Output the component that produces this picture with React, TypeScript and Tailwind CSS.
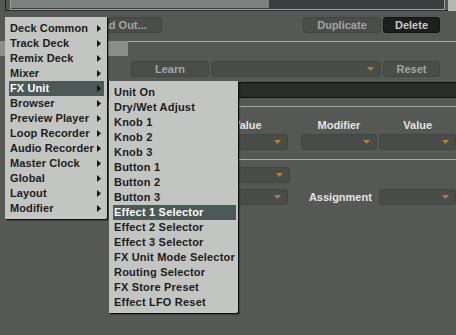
import React from 'react';

const mainItems = [
  'Deck Common',
  'Track Deck',
  'Remix Deck',
  'Mixer',
  'FX Unit',
  'Browser',
  'Preview Player',
  'Loop Recorder',
  'Audio Recorder',
  'Master Clock',
  'Global',
  'Layout',
  'Modifier',
];

const fxItems = [
  'Unit On',
  'Dry/Wet Adjust',
  'Knob 1',
  'Knob 2',
  'Knob 3',
  'Button 1',
  'Button 2',
  'Button 3',
  'Effect 1 Selector',
  'Effect 2 Selector',
  'Effect 3 Selector',
  'FX Unit Mode Selector',
  'Routing Selector',
  'FX Store Preset',
  'Effect LFO Reset',
];

const Arrow = () => (
  <svg width="4" height="7" viewBox="0 0 4 7" className="shrink-0">
    <polygon points="0,0 4,3.5 0,7" fill="#111" />
  </svg>
);

const Button = ({ label, w, dark }: { label: string; w: string; dark?: boolean }) => (
  <div
    className={`${w} h-[16px] rounded-[3px] border flex items-center justify-center text-[11px] font-bold ${
      dark ? 'bg-[#1d1e1d] border-[#121312] text-[#c9cbc9]' : 'bg-[#4b4d4b] border-[#434543] text-[#a3a5a3]'
    }`}
  >
    {label}
  </div>
);

const Dropdown = ({ w, className = '' }: { w: string; className?: string }) => (
  <div className={`${w} h-[16px] rounded-[3px] border border-[#434543] bg-[#4a4c4a] flex items-center justify-end pr-[6px] ${className}`}>
    <svg width="7" height="4" viewBox="0 0 7 4">
      <polygon points="0,0 7,0 3.5,4" fill="#b8812e" />
    </svg>
  </div>
);

export default function App() {
  return (
    <div className="relative w-[456px] h-[335px] overflow-hidden bg-[#565856] [font-family:'Liberation_Sans',Arial,sans-serif] text-[11px] leading-[15px]">
      {/* top scroll bar */}
      <div className="flex h-[11px] border-b border-[#2e302e] ml-[5px] mr-[8px]">
        <div className="w-px bg-[#1e201e]" />
        <div className="w-[4px]" />
        <div className="w-[435px] h-[10px] border-x border-b border-[#9c9e9c] bg-[#3a3e40]">
          <div className="w-[258px] h-[8px] bg-[#7c827f]" />
        </div>
      </div>
      <div className="absolute right-0 top-0 w-[8px] h-[11px] bg-[#b5b7b5]" />

      {/* buttons row */}
      <div className="flex mt-[6px]">
        <div className="ml-[74px]">
          <Button label="Load Out..." w="w-[88px]" />
        </div>
        <div className="ml-[141px]">
          <Button label="Duplicate" w="w-[78px]" />
        </div>
        <div className="ml-[2px]">
          <Button label="Delete" w="w-[57px]" dark />
        </div>
      </div>

      {/* tab line */}
      <div className="flex mt-[8px] h-[15px]">
        <div className="w-[128px] h-[15px] bg-[#8c8e8c] text-[#1c1c1c] font-bold pl-[5px]">D</div>
        <div className="flex-1 border-t border-[#a8aaa8]" />
      </div>

      {/* learn row */}
      <div className="flex mt-[5px] ml-[131px]">
        <Button label="Learn" w="w-[78px]" />
        <Dropdown w="w-[170px]" className="ml-[2px]" />
        <div className="ml-[2px]">
          <Button label="Reset" w="w-[57px]" />
        </div>
      </div>

      {/* table header band */}
      <div className="mt-[5px] ml-[100px] h-[16px] border-y border-[#0e0f0e] bg-[#2b2d2b]" />
      <div className="mt-[8px] ml-[100px] border-t border-[#a2a6a4]" />

      {/* column headers */}
      <div className="flex mt-[11px] ml-[207px] text-[#e4e4e4] font-bold">
        <div className="w-[82px] text-center">Value</div>
        <div className="w-[78px] ml-[13px] text-center">Modifier</div>
        <div className="w-[78px] ml-[2px] text-center">Value</div>
      </div>
      <div className="flex mt-[1px] ml-[207px]">
        <Dropdown w="w-[82px]" />
        <Dropdown w="w-[78px]" className="ml-[13px]" />
        <Dropdown w="w-[78px]" className="ml-[2px]" />
      </div>
      <div className="mt-[9px] ml-[150px] border-t border-[#a8aca8]" />

      <div className="flex mt-[7px] ml-[180px]">
        <Dropdown w="w-[110px]" />
      </div>
      <div className="flex items-center mt-[6px] ml-[180px]">
        <Dropdown w="w-[110px]" />
        <div className="w-[71px] ml-[21px] text-[#e4e4e4] font-bold">Assignment</div>
        <Dropdown w="w-[78px]" className="ml-[1px]" />
      </div>

      {/* main context menu */}
      <div className="absolute left-[5px] top-[17px] w-[102px] bg-[#c3c5c3] pt-[4px] pb-[3px] pl-[4px] pr-[3px] rounded-br-[2px] shadow-[1px_1px_0_#111,2px_2px_1px_rgba(0,0,0,0.3)]">
        {mainItems.map((item) => (
          <div
            key={item}
            className={`flex items-center justify-between h-[15px] pl-[1px] pr-[3px] font-bold tracking-[0.1px] ${
              item === 'FX Unit' ? 'bg-[#4b5957] text-white' : 'text-[#1c1c1c]'
            }`}
          >
            <span>{item}</span>
            <Arrow />
          </div>
        ))}
      </div>

      {/* FX Unit submenu */}
      <div className="absolute left-[109px] top-[81px] w-[129px] bg-[#c3c5c3] pt-[4px] pb-[3px] pl-[4px] pr-[2px] rounded-br-[2px] shadow-[1px_1px_0_#111,2px_2px_1px_rgba(0,0,0,0.3)]">
        {fxItems.map((item) => (
          <div
            key={item}
            className={`h-[15px] pl-[1px] font-bold tracking-[0.2px] whitespace-nowrap ${
              item === 'Effect 1 Selector' ? 'bg-[#4b5957] text-white' : 'text-[#1c1c1c]'
            }`}
          >
            {item}
          </div>
        ))}
      </div>
    </div>
  );
}
